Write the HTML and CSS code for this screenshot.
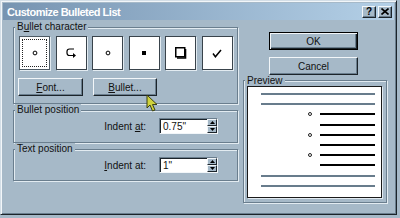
FILE: index.html
```html
<!DOCTYPE html>
<html>
<head>
<meta charset="utf-8">
<title>Customize Bulleted List</title>
<link rel="stylesheet" href="styles.css">
</head>
<body>
<div class="dialog">
  <div class="titlebar">
    <span class="title">Customize Bulleted List</span>
    <div class="tbtns">
      <span class="tbtn">?</span>
      <span class="tbtn">
        <svg width="8" height="7" viewBox="0 0 8 7"><path d="M0.5 0.5 L7.5 6.5 M7.5 0.5 L0.5 6.5" stroke="#000" stroke-width="1.6" fill="none"/></svg>
      </span>
    </div>
  </div>
  <div class="client">
    <div class="left">
      <fieldset class="group g1">
        <legend>B<u>u</u>llet character</legend>
        <div class="g1body">
          <div class="bullets">
            <div class="bbox sel"><div class="focus">
              <svg width="6" height="6" viewBox="0 0 6 6"><circle cx="3" cy="3" r="1.9" stroke="#000" stroke-width="1" fill="none"/></svg>
            </div></div>
            <div class="bbox">
              <svg width="11" height="10" viewBox="0 0 11 10"><path d="M8 1 H3.5 Q1 1 1 3.5 V5 Q1 7.5 3.5 7.5 H7.5" stroke="#000" stroke-width="1.2" fill="none"/><path d="M7 5 L10 7.5 L7 10 Z" fill="#000"/></svg>
            </div>
            <div class="bbox">
              <svg width="6" height="6" viewBox="0 0 6 6"><circle cx="3" cy="3" r="1.9" stroke="#000" stroke-width="1" fill="none"/></svg>
            </div>
            <div class="bbox">
              <svg width="4" height="4" viewBox="0 0 4 4"><rect x="0" y="0" width="4" height="4" fill="#000"/></svg>
            </div>
            <div class="bbox">
              <svg width="12" height="12" viewBox="0 0 12 12"><rect x="0.75" y="0.75" width="9" height="9" stroke="#000" stroke-width="1.5" fill="#fff"/><path d="M10.5 2 V11 H2" stroke="#000" stroke-width="1.6" fill="none"/></svg>
            </div>
            <div class="bbox">
              <svg width="10" height="9" viewBox="0 0 10 9"><path d="M1 4.5 L3.4 7.8 L9 1" stroke="#000" stroke-width="1.5" fill="none"/></svg>
            </div>
          </div>
          <div class="brow">
            <button class="btn bfont"><u>F</u>ont...</button>
            <button class="btn bbul"><u>B</u>ullet...</button>
          </div>
        </div>
      </fieldset>
      <fieldset class="group g2">
        <legend>Bullet position</legend>
        <div class="irow r2">
          <span class="ilabel">Indent <u>a</u>t:</span>
          <div class="spin">
            <span class="ifield">0.75"</span>
            <div class="arrows">
              <span class="arr"><svg width="5" height="3" viewBox="0 0 5 3"><path d="M2.5 0 L5 3 H0 Z" fill="#000"/></svg></span>
              <span class="arr"><svg width="5" height="3" viewBox="0 0 5 3"><path d="M0 0 H5 L2.5 3 Z" fill="#000"/></svg></span>
            </div>
          </div>
        </div>
      </fieldset>
      <fieldset class="group g3">
        <legend>Text position</legend>
        <div class="irow r3">
          <span class="ilabel"><u>I</u>ndent at:</span>
          <div class="spin">
            <span class="ifield">1"</span>
            <div class="arrows">
              <span class="arr"><svg width="5" height="3" viewBox="0 0 5 3"><path d="M2.5 0 L5 3 H0 Z" fill="#000"/></svg></span>
              <span class="arr"><svg width="5" height="3" viewBox="0 0 5 3"><path d="M0 0 H5 L2.5 3 Z" fill="#000"/></svg></span>
            </div>
          </div>
        </div>
      </fieldset>
    </div>
    <div class="right">
      <button class="btn okbtn">OK</button>
      <button class="btn cancelbtn">Cancel</button>
      <fieldset class="group preview">
        <legend>Preview</legend>
        <div class="pvwrap">
          <div class="pvbox">
            <div class="pl gray"></div>
            <div class="pl gray"></div>
            <div class="pl"><span class="pb"></span><span class="pk"></span></div>
            <div class="pl"><span class="pk ind"></span></div>
            <div class="pl"><span class="pb"></span><span class="pk"></span></div>
            <div class="pl"><span class="pk ind"></span></div>
            <div class="pl"><span class="pb"></span><span class="pk"></span></div>
            <div class="pl"><span class="pk ind"></span></div>
            <div class="pl gray"></div>
            <div class="pl gray"></div>
          </div>
        </div>
      </fieldset>
    </div>
  </div>
</div>
<svg class="cursor" width="14" height="19" viewBox="0 0 14 19">
  <path d="M1 1 L1 14 L4 11 L6.5 17 L9 16 L6.5 10.5 L11 10.5 Z" fill="#cfd23c" stroke="#3a3f10" stroke-width="1" stroke-linejoin="round"/>
</svg>
</body>
</html>
```

FILE: styles.css
```css
:root {
  --face: #a6b9c8;
  --light: #e2ebf1;
  --white: #f2f6f9;
  --dark: #6a7e8e;
  --darker: #1c242a;
}

body {
  margin: 0;
  width: 400px;
  height: 218px;
  overflow: hidden;
  position: relative;
  background: var(--face);
  font-family: "Liberation Sans", Arial, sans-serif;
  font-size: 10px;
  color: #111;
}

.dialog {
  box-sizing: border-box;
  width: 397px;
  height: 215px;
  border: 1px solid;
  border-color: #d3dee7 var(--darker) var(--darker) #d3dee7;
  box-shadow: inset 1px 1px 0 var(--white), inset -1px -1px 0 var(--dark);
  padding: 2px;
}

.titlebar {
  height: 17px;
  display: flex;
  align-items: center;
  justify-content: space-between;
  background: linear-gradient(to right, #7794b1, #b4d0e7);
  padding: 0 2px 0 4px;
}

.title {
  color: #fff;
  font-weight: bold;
  font-size: 11px;
  letter-spacing: -0.5px;
}

.tbtns {
  display: flex;
  gap: 2px;
}

.tbtn {
  box-sizing: border-box;
  width: 14px;
  height: 12px;
  display: flex;
  align-items: center;
  justify-content: center;
  background: var(--face);
  border: 1px solid;
  border-color: var(--white) var(--darker) var(--darker) var(--white);
  box-shadow: inset -1px -1px 0 var(--dark);
  font-weight: bold;
  font-size: 10px;
  line-height: 10px;
  color: #000;
}

.client {
  display: flex;
  padding: 1px 0 0 10px;
}

.left {
  width: 225px;
  display: flex;
  flex-direction: column;
}

.right {
  width: 144px;
  margin-left: 5px;
  display: flex;
  flex-direction: column;
}

fieldset.group {
  margin: 0;
  padding: 0;
  min-width: 0;
  border: 1px solid var(--dark);
  box-shadow: inset 1px 1px 0 var(--light), 1px 1px 0 var(--light);
}

legend {
  padding: 0 2px;
  margin-left: 1px;
  line-height: 12px;
  background: var(--face);
}

.g1 { margin-top: 7px; }

.g1body {
  padding: 3px 0 7px 5px;
}

.bullets {
  display: flex;
  gap: 5.6px;
}

.bbox {
  box-sizing: border-box;
  width: 31px;
  height: 34px;
  background: #fff;
  border: 1px solid #39434b;
  box-shadow: 1px 1px 0 var(--light);
  display: flex;
  align-items: center;
  justify-content: center;
}

.bbox.sel {
  border-color: #4d5a64;
  padding: 2px;
}

.focus {
  box-sizing: border-box;
  width: 100%;
  height: 100%;
  border: 1px dotted #222;
  display: flex;
  align-items: center;
  justify-content: center;
}

.brow {
  display: flex;
  gap: 10px;
  margin: 8px 0 0 -1px;
}

.btn {
  box-sizing: border-box;
  height: 18px;
  padding: 0;
  margin: 0;
  font: inherit;
  color: #111;
  background: var(--face);
  border: 1px solid;
  border-color: var(--white) var(--darker) var(--darker) var(--white);
  box-shadow: inset -1px -1px 0 var(--dark);
  display: flex;
  align-items: center;
  justify-content: center;
}

.bfont { width: 65px; }
.bbul { width: 64px; }

.g2 { margin-top: 8px; }
.g3 { margin-top: 7px; }

.irow {
  display: flex;
  justify-content: flex-end;
  align-items: center;
  padding-right: 19px;
}

.r2 { padding-top: 2px; padding-bottom: 8px; }
.r3 { padding-top: 2px; padding-bottom: 7px; }

.ilabel {
  margin-right: 13px;
}

.spin {
  display: flex;
  box-sizing: border-box;
  height: 16px;
  border: 1px solid;
  border-color: var(--dark) var(--white) var(--white) var(--dark);
  box-shadow: inset 1px 1px 0 var(--darker);
  background: #fff;
}

.ifield {
  width: 47px;
  padding: 1px 0 0 3px;
  box-sizing: border-box;
  display: flex;
  align-items: center;
}

.arrows {
  display: flex;
  flex-direction: column;
  width: 10px;
}

.arr {
  box-sizing: border-box;
  height: 7px;
  display: flex;
  align-items: center;
  justify-content: center;
  background: var(--face);
  border: 1px solid;
  border-color: var(--white) var(--darker) var(--darker) var(--white);
}

.okbtn {
  width: 89px;
  margin: 11px 0 0 26px;
  border: 1px solid #000;
  box-shadow: inset 1px 1px 0 var(--white), inset -1px -1px 0 var(--darker), inset -2px -2px 0 var(--dark);
}

.cancelbtn {
  width: 89px;
  margin: 7px 0 0 26px;
}

.preview {
  margin-top: 3px;
}

.preview legend {
  line-height: 11px;
}

.pvwrap {
  padding: 0 4px 4px 3px;
}

.pvbox {
  box-sizing: border-box;
  height: 112px;
  background: #fff;
  border: 1px solid #1a1a1a;
  box-shadow: 1px 1px 0 var(--light);
  padding: 6px 6px 0 13px;
  display: flex;
  flex-direction: column;
  gap: 8.2px;
}

.pl {
  height: 2px;
  display: flex;
  align-items: center;
}

.pl.gray {
  background: #687c8c;
}

.pb {
  box-sizing: border-box;
  width: 4px;
  height: 4px;
  border: 1px solid #222;
  border-radius: 50%;
  margin-left: 47px;
  margin-right: 8px;
}

.pk {
  flex: 1;
  height: 2px;
  background: #000;
}

.pk.ind {
  margin-left: 59px;
}

.cursor {
  position: absolute;
  left: 146px;
  top: 94px;
}
```
